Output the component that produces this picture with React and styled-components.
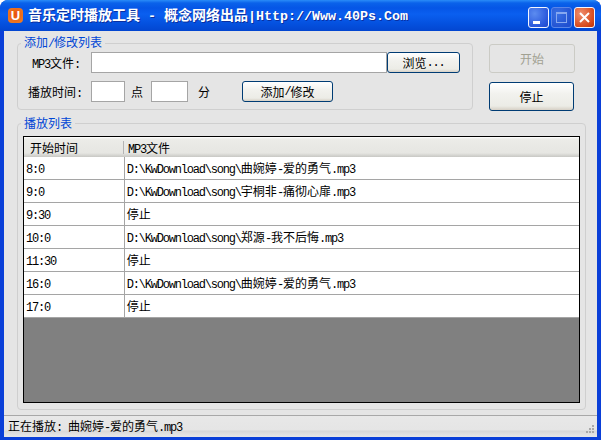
import React from 'react';
import styled, { createGlobalStyle } from 'styled-components';

const GlobalStyle = createGlobalStyle`
  html, body {
    margin: 0;
    padding: 0;
    background: #fff;
  }
  body {
    font-family: "Noto Sans CJK SC", "Liberation Sans", sans-serif;
    font-size: 12px;
    color: #000;
  }
`;

const Win = styled.div`
  width: 601px;
  height: 440px;
  display: flex;
  flex-direction: column;
  box-sizing: border-box;
  border-radius: 8px 8px 0 0;
  overflow: hidden;
  background: #0a3fd8;
`;

const TitleBar = styled.div`
  height: 31px;
  flex: none;
  display: flex;
  align-items: center;
  padding: 0 6px 0 8px;
  box-sizing: border-box;
  background: linear-gradient(180deg, #2a8cf8 0, #0a62ea 3px, #0556e6 8px, #0a5ff0 14px, #0450de 24px, #0346d0 31px);
`;

const AppIcon = styled.span`
  width: 15px;
  height: 15px;
  margin-right: 5px;
  border-radius: 4px;
  background: radial-gradient(circle at 50% 45%, #e8500f, #f07a20 80%);
  color: #fff;
  font: bold 13px/15px "Liberation Sans", sans-serif;
  text-align: center;
  flex: none;
`;

const Caption = styled.div`
  flex: 1;
  color: #fff;
  font-size: 14px;
  font-weight: 700;
  white-space: pre;
  text-shadow: 1px 1px 0 #0a2fa0;
  line-height: 16px;
  margin-top: -1px;
`;

const CaptionLatin = styled.span`
  font-family: "Liberation Mono", monospace;
  font-size: 13.33px;
  font-weight: 700;
`;

const WinButtons = styled.div`
  display: flex;
  gap: 2px;
  margin-top: 3px;
`;

const WinButton = styled.div`
  width: 21px;
  height: 21px;
  box-sizing: border-box;
  border: 1px solid ${p => (p.$faded ? '#5a86e8' : '#f4f6ff')};
  border-radius: 3px;
  background: ${p =>
    p.$close
      ? 'radial-gradient(circle at 30% 30%, #f09070, #d84a1c 70%, #b83208)'
      : p.$faded
      ? 'radial-gradient(circle at 30% 30%, #3a70e4, #2050d0 80%)'
      : 'radial-gradient(circle at 30% 30%, #5c8cf0, #2a58dc 70%, #1f48c8)'};
  svg {
    display: block;
  }
`;

const Client = styled.div`
  flex: 1;
  min-height: 0;
  margin: 0 4px 3px;
  background: #e5e5e5;
  display: flex;
  flex-direction: column;
`;

const Content = styled.div`
  flex: 1;
  min-height: 0;
  padding: 4px 0 0 13px;
  display: flex;
  flex-direction: column;
  gap: 5px;
`;

const TopRow = styled.div`
  display: flex;
`;

const Group = styled.fieldset`
  margin: 0;
  box-sizing: border-box;
  min-width: 0;
  width: ${p => p.$w}px;
  height: ${p => p.$h}px;
  padding: ${p => p.$pad};
  border: 1px solid #cfcfcf;
  border-radius: 4px;
`;

const GroupTitle = styled.legend`
  margin-left: 3px;
  padding: 0 3px 0 3px;
  color: #0046d5;
  font-size: 12px;
  line-height: 14px;
`;

const FormRow = styled.div`
  display: flex;
  align-items: center;
  height: 21px;
  margin-bottom: 8px;
`;

const Label = styled.div`
  width: ${p => p.$w}px;
  margin-right: ${p => 73 - p.$w}px;
  text-align: right;
  white-space: pre;
`;

const Input = styled.div`
  box-sizing: border-box;
  width: ${p => p.$w}px;
  height: 21px;
  background: #fff;
  border: 1px solid #a5a5a5;
`;

const Unit = styled.span`
  margin: 0 ${p => p.$right}px 0 ${p => p.$left}px;
`;

const Button = styled.div`
  box-sizing: border-box;
  width: ${p => p.$w}px;
  height: ${p => p.$h}px;
  margin-left: ${p => p.$left || 0}px;
  display: flex;
  align-items: center;
  justify-content: center;
  border: 1px solid ${p => (p.$disabled ? '#cbcbc5' : '#003c74')};
  border-radius: 3px;
  color: ${p => (p.$disabled ? '#a1a192' : '#000')};
  background: ${p =>
    p.$disabled ? '#e5e5e5' : 'linear-gradient(180deg, #fff 0, #f2f2ee 40%, #ecece6 85%, #d6d0c5 100%)'};
`;

const SideButtons = styled.div`
  margin: 9px 0 0 16px;
  display: flex;
  flex-direction: column;
  gap: 9px;
`;

const ListFrame = styled.div`
  height: 267px;
  margin: 6px 5px 0 5px;
  box-sizing: border-box;
  border: 1px solid #000;
  background: #808080;
  display: flex;
  flex-direction: column;
`;

const Header = styled.div`
  height: 20px;
  flex: none;
  display: flex;
  align-items: center;
  background: linear-gradient(180deg, #fff 0, #ecece8 2px, #e6e6e2 16px, #c8c8c4 20px);
`;

const HeadCell = styled.div`
  width: ${p => p.$w}px;
  padding-left: ${p => p.$pad}px;
  box-sizing: border-box;
  height: 13px;
  line-height: 13px;
  white-space: pre;
  &:first-child {
    border-right: 1px solid #b4b4b4;
  }
`;

const Row = styled.div`
  display: flex;
  height: 23px;
  flex: none;
  box-sizing: border-box;
  background: #fff;
  border-bottom: 1px solid #a5a5a5;
`;

const Cell = styled.div`
  width: ${p => p.$w}px;
  padding-left: 2px;
  box-sizing: border-box;
  line-height: 21px;
  white-space: pre;
  &:first-child {
    border-right: 1px solid #a5a5a5;
  }
`;

const StatusBar = styled.div`
  height: 22px;
  flex: none;
  position: relative;
  box-sizing: border-box;
  padding-left: 4px;
  line-height: 20px;
  border-top: 1px solid #a8a8a8;
  background: linear-gradient(180deg, #e8e8e8 0, #e5e5e5 14px, #d8d8d8 15px, #e5e5e5 20px);
  white-space: pre;
`;

const Grip = styled.svg`
  position: absolute;
  right: 2px;
  bottom: 1px;
`;

const Latin = styled.span`
  font-family: "Liberation Mono", monospace;
  font-size: 12px;
  letter-spacing: -1.2px;
`;

// ascii runs go in the narrow mono face, the rest stays CJK
const Txt = ({ children, as: Run = Latin }) =>
  children.split(/([\x00-\x7f]+)/).map((part, i) =>
    i % 2 ? <Run key={i}>{part}</Run> : part
  );

const rows = [
  ['8:0', 'D:\\KwDownload\\song\\曲婉婷-爱的勇气.mp3'],
  ['9:0', 'D:\\KwDownload\\song\\宇桐非-痛彻心扉.mp3'],
  ['9:30', '停止'],
  ['10:0', 'D:\\KwDownload\\song\\郑源-我不后悔.mp3'],
  ['11:30', '停止'],
  ['16:0', 'D:\\KwDownload\\song\\曲婉婷-爱的勇气.mp3'],
  ['17:0', '停止'],
];

const App = () => {
  return (
    <>
      <GlobalStyle />
      <Win>
        <TitleBar>
          <AppIcon>U</AppIcon>
          <Caption>
            <Txt as={CaptionLatin}>{'音乐定时播放工具 - 概念网络出品|Http://Www.40Ps.Com'}</Txt>
          </Caption>
          <WinButtons>
            <WinButton>
              <svg width="19" height="19">
                <rect x="4" y="13" width="7" height="3" fill="#fff" />
              </svg>
            </WinButton>
            <WinButton $faded>
              <svg width="19" height="19">
                <rect x="4.5" y="4.5" width="10" height="10" fill="none" stroke="#86a8f0" />
                <rect x="4" y="4" width="11" height="2" fill="#86a8f0" />
              </svg>
            </WinButton>
            <WinButton $close>
              <svg width="19" height="19">
                <path d="M5 5 L14 14 M14 5 L5 14" stroke="#fff" strokeWidth="2" />
              </svg>
            </WinButton>
          </WinButtons>
        </TitleBar>
        <Client>
          <Content>
            <TopRow>
              <Group $w={456} $h={75} $pad="1px 0 0 0">
                <GroupTitle><Txt>{'添加/修改列表'}</Txt></GroupTitle>
                <FormRow>
                  <Label $w={62}><Txt>{'MP3文件:'}</Txt></Label>
                  <Input $w={296} />
                  <Button $w={73} $h={21}>浏览<Latin>...</Latin></Button>
                </FormRow>
                <FormRow>
                  <Label $w={64}>播放时间<Latin>:</Latin></Label>
                  <Input $w={34} />
                  <Unit $left={6} $right={8}>点</Unit>
                  <Input $w={37} />
                  <Unit $left={10} $right={32}>分</Unit>
                  <Button $w={91} $h={21}><Txt>{'添加/修改'}</Txt></Button>
                </FormRow>
              </Group>
              <SideButtons>
                <Button $w={86} $h={29} $disabled>开始</Button>
                <Button $w={85} $h={29}>停止</Button>
              </SideButtons>
            </TopRow>
            <Group $w={569} $h={294} $pad="0">
              <GroupTitle>播放列表</GroupTitle>
              <ListFrame>
                <Header>
                  <HeadCell $w={100} $pad={6}>开始时间</HeadCell>
                  <HeadCell $w={300} $pad={4}><Txt>{'MP3文件'}</Txt></HeadCell>
                </Header>
                {rows.map((r, i) => (
                  <Row key={i}>
                    <Cell $w={101}><Txt>{r[0]}</Txt></Cell>
                    <Cell $w={455}><Txt>{r[1]}</Txt></Cell>
                  </Row>
                ))}
              </ListFrame>
            </Group>
          </Content>
          <StatusBar>
            <Txt>{'正在播放: 曲婉婷-爱的勇气.mp3'}</Txt>
            <Grip width="12" height="12">
              <g fill="#a8a8a8">
                <rect x="9" y="1" width="2" height="2" />
                <rect x="6" y="4" width="2" height="2" />
                <rect x="9" y="4" width="2" height="2" />
                <rect x="3" y="7" width="2" height="2" />
                <rect x="6" y="7" width="2" height="2" />
                <rect x="9" y="7" width="2" height="2" />
              </g>
            </Grip>
          </StatusBar>
        </Client>
      </Win>
    </>
  );
};

export default App;
